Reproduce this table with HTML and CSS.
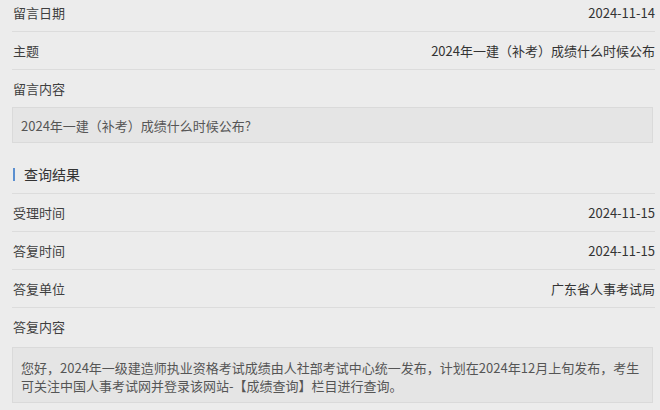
FILE: index.html
```
<!DOCTYPE html>
<html lang="zh-CN">
<head>
<meta charset="utf-8">
<link rel="stylesheet" href="styles.css">
</head>
<body>
<div class="page">
  <div class="row"><span class="label">留言日期</span><span class="value">2024-11-14</span></div>
  <div class="row"><span class="label">主题</span><span class="value">2024年一建（补考）成绩什么时候公布</span></div>
  <div class="row row-plain"><span class="label">留言内容</span></div>
  <div class="box box-q">2024年一建（补考）成绩什么时候公布?</div>
  <div class="section"><span class="bar"></span><span class="section-title">查询结果</span></div>
  <div class="row"><span class="label">受理时间</span><span class="value">2024-11-15</span></div>
  <div class="row"><span class="label">答复时间</span><span class="value">2024-11-15</span></div>
  <div class="row"><span class="label">答复单位</span><span class="value">广东省人事考试局</span></div>
  <div class="row row-plain"><span class="label">答复内容</span></div>
  <div class="box box-a">您好，2024年一级建造师执业资格考试成绩由人社部考试中心统一发布，计划在2024年12月上旬发布，考生可关注中国人事考试网并登录该网站-【成绩查询】栏目进行查询。</div>
</div>
</body>
</html>
```
FILE: styles.css
```
html, body {
  margin: 0;
  padding: 0;
  background: #ececec;
}
body {
  font-family: "Noto Sans CJK SC", "Noto Sans", sans-serif;
  font-size: 13px;
  color: #3f3f3f;
}
.page {
  margin: -6px 5px 0 12px;
  display: flex;
  flex-direction: column;
}
.row {
  display: flex;
  justify-content: space-between;
  align-items: center;
  height: 37px;
  border-bottom: 1px solid #dcdcdc;
  padding-left: 1px;
}
.row-plain {
  border-bottom: none;
}
.value {
  color: #333;
}
.box {
  background: #e5e5e5;
  border: 1px solid #dadada;
  color: #555;
  margin-right: 2px;
}
.box-q {
  line-height: 19px;
  padding: 8px 8px 7px 8px;
}
.box-a {
  line-height: 18px;
  padding: 11px 8px 7px 8px;
  margin-top: 2px;
}
.section {
  display: flex;
  align-items: center;
  height: 38px;
  margin-top: 12px;
  border-bottom: 1px solid #dcdcdc;
}
.bar {
  width: 2px;
  height: 13px;
  background: #5b8fd0;
  margin-left: 1px;
  margin-right: 9px;
}
.section-title {
  font-size: 14px;
  color: #333;
}
```
